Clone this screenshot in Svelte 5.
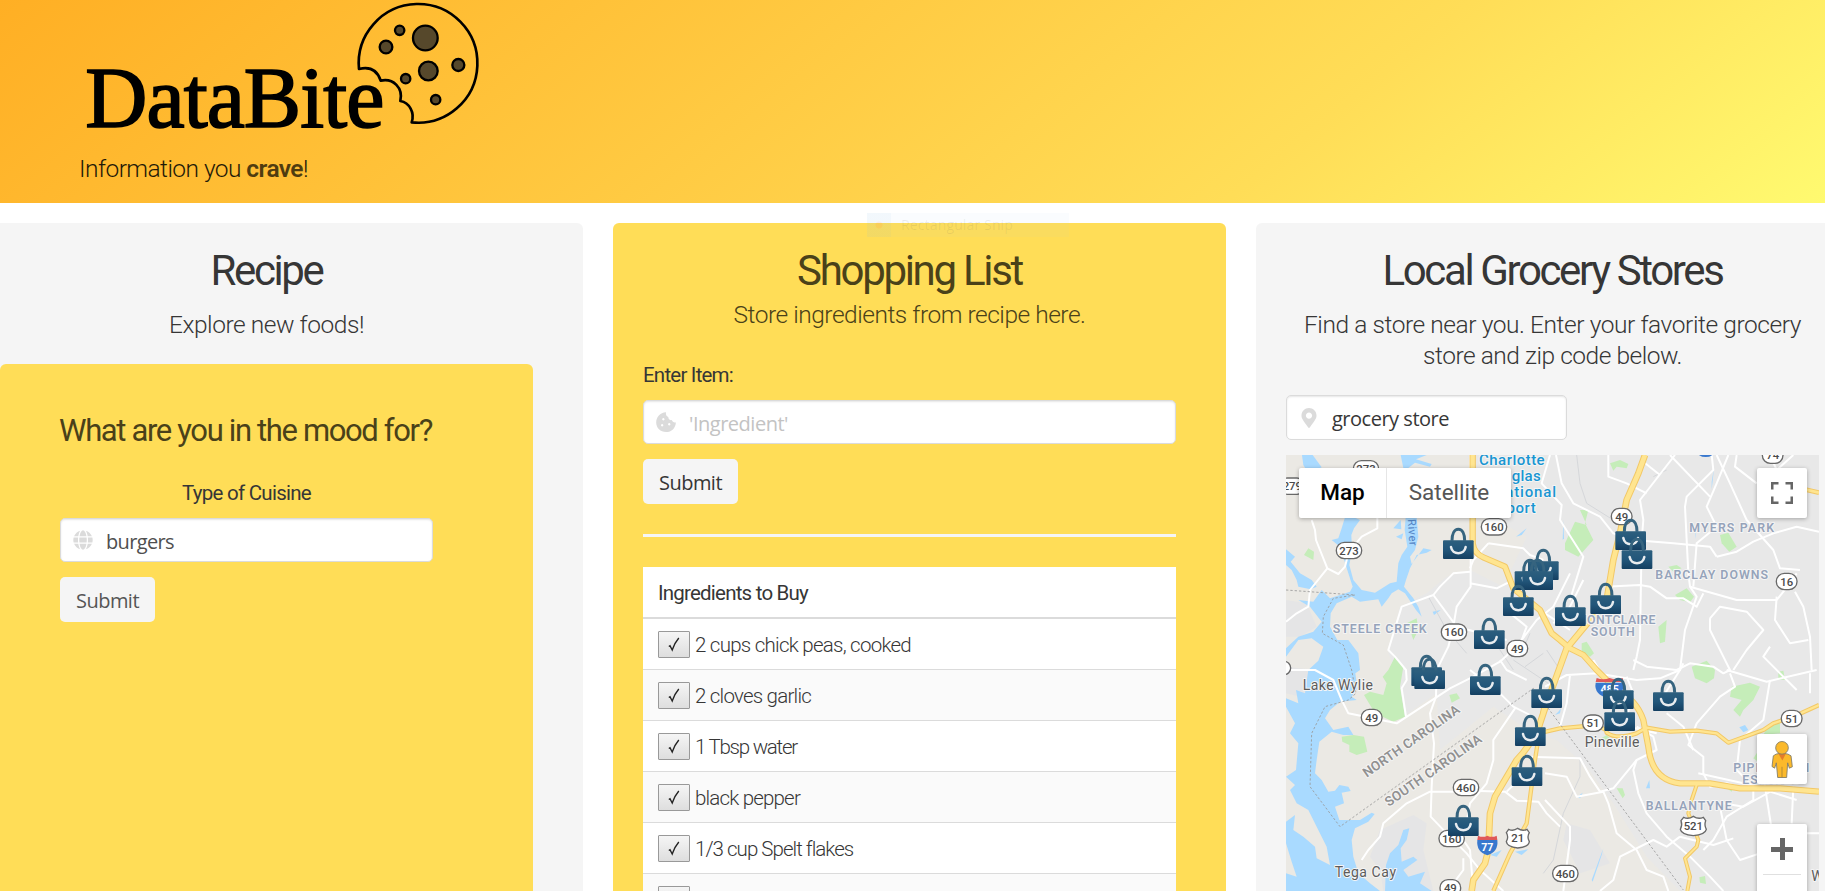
<script>
  const ingredients = [
    { text: '2 cups chick peas, cooked', width: 216 },
    { text: '2 cloves garlic', width: 116 },
    { text: '1 Tbsp water', width: 102 },
    { text: 'black pepper', width: 105 },
    { text: '1/3 cup Spelt flakes', width: 158 },
    { text: '', width: 0 }
  ];

  // Adjusts tracking so that a heading occupies its design width.
  function fit(node, width) {
    if (!width) return;
    const natural = node.getBoundingClientRect().width;
    const gap = (width - natural) / node.textContent.length;
    node.style.letterSpacing = `${gap.toFixed(3)}px`;
  }

  // Map geometry: three units per CSS pixel.
  const water = [
    'M66 45H98L125 82 85 100 70 75Z',
    'M362 45H440L408 58 455 72 450 80 405 68 385 84H370Z',
    'M195 232H222L240 240 222 265 214 285 216 330 208 375 220 420 245 450 285 458 330 430 350 425 355 370 365 345 382 320 374 270 377 232H410L415 290 405 330 390 350 395 372 430 325 455 330 440 338 410 345 390 385 378 420 372 440 400 475 415 500 425 530 408 510 375 460 355 448 335 460 325 475 305 500 295 478 240 485 215 470 170 490 152 520 150 560 172 600 205 600 235 640 240 690 226 700 232 745 215 770 230 780 180 785 150 810 135 835 160 870 205 860 220 885 190 885 155 875 118 905 110 960 105 1000 125 1020 145 1055 165 1052 178 1035 205 1040 212 1053 185 1058 192 1090 165 1100 178 1140 240 1140 275 1118 284 1122 265 1145 225 1165 215 1200 220 1250 235 1300 270 1330 300 1353H18V1300L50 1310 35 1265 18 1210 18 1145 45 1125 40 1170 70 1190 105 1220 110 1255 150 1275 140 1220 110 1160 85 1110 50 1090 30 1050 45 1035 18 1010 48 990 55 910 30 880 45 850 18 800 18 775 55 790 48 750 75 760 85 690 115 662 130 620 95 595 55 600 18 650V625L55 590 100 575 125 545 90 500 55 480 100 485 125 450 150 475 210 455 218 440 205 400 180 320 155 300 175 295 185 265Z',
    'M18 328L45 350 32 365 60 400 95 420 110 440 92 448 55 440 50 420 35 390 18 375Z',
    'M340 265L362 240 364 268Z', 'M348 290L370 280 365 298Z',
    'M315 1353L318 1275 330 1240 355 1215 370 1170 388 1165 380 1200 362 1225 365 1265 400 1250 412 1260 370 1290 385 1310 435 1295 420 1330 455 1353Z',
    'M1295 125L1302 85 1295 150Z', 'M708 290L740 265 725 285Z', 'M458 515L482 510 462 525Z',
    'M835 815L843 805 840 820 825 825Z', 'M1378 862L1395 855 1405 870 1390 877Z', 'M630 1245L665 1230 650 1250Z',
    'M705 1235L745 1228 725 1245Z', 'M892 1070L908 1058 900 1075Z', 'M935 1320L970 1225 965 1245 938 1325Z',
    'M1098 1045L1108 1020 1110 1045Z', 'M850 240L852 295 848 300Z', 'M1245 280V298L1247 280Z'
  ];
  const parks = [
    'M855 310L885 245 920 255 900 210 925 210 915 250 940 300 895 350 855 330Z',
    'M990 70L1020 60 1045 72 1040 85 1010 80 1000 92Z',
    'M1320 285L1345 278 1370 320 1348 335 1325 310Z',
    'M1185 465L1220 445 1242 470 1230 487 1200 480Z',
    'M1165 380L1190 375 1205 385 1180 395Z', 'M1135 560L1160 540 1155 605 1140 610Z',
    'M905 610L920 605 942 640 930 650 905 635Z', 'M1235 680L1280 662 1305 690 1302 715 1280 730 1245 715Z',
    'M325 690L345 650 370 680 360 740 375 830 340 845 285 820 252 765 270 755 310 765 320 730 308 710Z',
    'M185 890L220 885 252 890 262 935 230 945 208 935 208 915 187 905Z',
    'M508 765L530 760 540 775 515 788Z', 'M72 345L85 325 102 335 100 360Z',
    'M380 550L410 535 415 570 400 600 390 570Z',
    'M1355 740L1410 728 1440 740 1420 780 1390 810 1380 830 1360 810 1385 780 1350 770Z',
    'M1495 695L1510 692 1515 720 1495 718Z', 'M1465 855L1500 840 1500 880 1450 885Z',
    'M1010 1045L1028 1045 1035 1065 1028 1075Z', 'M1258 1312L1275 1308 1278 1332 1260 1328Z',
    'M1440 925L1440 970 1420 955Z', 'M955 900L980 885 990 895 970 905Z', 'M1340 1045L1360 1040 1355 1055Z'
  ];
  const roads = [
    'M95 240L105 270 108 300 142 385 175 402 195 380 210 320M142 385L90 450 85 500 50 520 18 545M292 232V265L245 290 220 320',
    'M570 45V90M572 355V440L530 500 520 560 505 620 470 690 468 770 450 820 462 910 455 1040 452 1130 500 1180 560 1240 600 1290 670 1353',
    'M460 465L480 440 520 400 570 395M460 465L365 500 325 630 345 650 378 690 380 720 365 745 378 830M460 465L530 560 680 600',
    'M625 310L730 325 750 345 790 360M625 310L580 360 570 385M570 430L650 445 700 420M690 520L740 560 725 600 770 540 820 500 870 400',
    'M18 690L105 690 160 720 185 780 205 820 350 850 510 745 580 710 660 665 720 610',
    'M660 660L680 690 740 720M570 690L660 760 700 800 760 830M705 805L640 900V960L620 1030 570 1090 550 1200 570 1230 580 1353',
    'M245 1260L265 1230 300 1190 310 1150 380 1090 450 1055 520 1055M600 1053L675 1055 710 1082 775 1085 800 1120 840 1160',
    'M680 1055L700 1035 740 1025M740 950L900 955 930 1010 960 1055 1000 1045 1070 960M550 1255L550 1290 520 1330',
    'M810 45L785 130 845 195 840 240 910 350 870 480M828 45L845 130 880 190 960 230 1000 280 1060 300 1180 310 1290 320 1310 350',
    'M985 45V110L1040 130 1100 160M1090 65L1140 105M1185 45L1080 180 1090 240 1085 300 1080 600 1070 650 1060 690',
    'M1295 45L1300 90 1220 170 1215 200 1225 400 1230 440 1250 470 1215 570 1200 690 1130 800M1345 45L1310 130 1280 200 1310 260 1250 310 1240 440',
    'M1310 45L1350 130 1400 240 1480 330 1500 385 1560 390M1370 45L1365 80 1430 130M1170 45L1290 170',
    'M910 420L870 500 820 550M975 440L1080 435 1110 440 1160 475 1210 475 1250 500 1270 460M1230 440L1370 480 1490 480 1530 430 1550 400',
    'M1310 350L1370 335 1420 305 1480 280 1550 260 1617 275M1545 455L1570 500 1590 590 1595 690M1490 470L1485 540 1530 610 1585 600',
    'M1290 535L1320 500 1400 515 1450 570 1400 630 1360 690M1290 535V570L1330 650 1350 690 1330 700 1300 680 1230 670 1190 690 1100 680 1060 660',
    'M1350 700L1365 740 1320 770 1250 850 1225 915 1270 950 1270 1000 1290 1040 1340 1030 1410 1050M1340 690L1460 725 1610 690',
    'M795 740L860 705 950 700 1070 720 1140 715 1200 690 1210 670M870 705L860 790 840 860M1040 710L1060 760 1040 830 1045 860 1130 880',
    'M940 660L970 710M1160 820L1210 860 1240 930M1070 860L1120 890 1130 930 1070 960 1060 990 1075 1060 1100 1120 1160 1190 1230 1250 1290 1310 1330 1353',
    'M1590 700L1590 760M1470 720L1450 840 1380 900 1370 990 1420 1040 1420 1080 1340 1130 1300 1200 1270 1230',
    'M1450 1010L1455 1040 1480 1200M1540 1040L1535 1150M1200 1190L1160 1220 1120 1200 1020 1250 1000 1320 960 1353',
    'M795 1000L860 1010 890 1070 970 1055 985 1090 1010 1180 1070 1230 1100 1290 1150 1310 1165 1353M795 1080L870 1160 870 1200 850 1353',
    'M1320 1100L1340 1200 1380 1260 1440 1240M1200 1190L1300 1215 1360 1195M1255 1000L1390 1030 1550 1080M1480 1050L1390 1100 1330 1090',
    'M1550 750L1450 650 1470 620M1550 1180L1617 1180M795 520L870 570M1540 45L1490 90 1470 45'
  ];
  const highways = [
    { d: 'M578 45V310Q582 340 610 352L675 380 700 445 780 510 815 580 840 600 868 624 910 645 950 690 1010 750Q1070 780 1090 840L1105 920Q1115 1020 1200 1030L1290 1030 1380 1045 1500 1045 1617 1055', w: 16 },
    { d: 'M1095 45L1075 100 1040 180 1020 280 1000 360 980 480 860 625 800 790 780 850Q750 920 710 960L645 1070 630 1120 625 1230 615 1270 580 1320 575 1353', w: 17 },
    { d: 'M790 800L765 960 740 1150 690 1240 640 1353', w: 10 },
    { d: 'M775 880L840 865 920 858Q980 860 980 878Q1010 900 1070 880L1100 863 1170 875 1250 872 1310 880 1345 908 1450 870 1480 850 1540 830 1617 795', w: 10 },
    { d: 'M1250 1035L1235 1080 1225 1120 1255 1200 1250 1220 1215 1255 1230 1310 1222 1353', w: 9 },
    { d: 'M1495 105L1540 140 1617 158', w: 11 }
  ];
  const shields = [
    ['273', 258, 87], ['279', 37, 139], ['273', 207, 332], ['160', 642, 261], ['160', 522, 577],
    ['49', 712, 626], ['49', 1025, 230], ['16', 1520, 425], ['74', 1478, 46], ['49', 275, 833],
    ['460', 558, 1043], ['160', 515, 1196], ['49', 511, 1344], ['51', 939, 850], ['51', 1535, 836],
    ['460', 856, 1301]
  ];
  const bags = [
    [535, 357], [790, 420], [750, 450], [773, 450], [715, 528], [628, 627], [1052, 330], [1071, 387],
    [977, 522], [871, 558], [440, 738], [449, 747], [616, 765], [800, 804], [751, 918],
    [741, 1038], [550, 1188], [1015, 807], [1019, 873], [1165, 813]
  ];
</script>

<div class="page">
  <header>
    <svg class="logo" viewBox="60 0 1200 456">
      <text x="76" y="382" textLength="897">DataBite</text>
      <path d="M897 207A178 178 0 1 1 1055 367C1065 337 1048 308 1021 303C1030 263 1000 234 962 242C952 211 930 199 897 207Z" />
      <g class="chips">
        <circle cx="1096" cy="114" r="37" /><circle cx="1019" cy="91" r="14" />
        <circle cx="978" cy="141" r="19" /><circle cx="1105" cy="213" r="28" />
        <circle cx="1037" cy="236" r="14" /><circle cx="1195" cy="195" r="18" />
        <circle cx="1127" cy="299" r="14" />
      </g>
    </svg>
    <p class="lead"><span use:fit={229}>Information you <b>crave</b>!</span></p>
  </header>

  <main>
    <section class="panel recipe">
      <h1><span use:fit={112}>Recipe</span></h1>
      <p class="lead sub"><span use:fit={195}>Explore new foods!</span></p>
      <div class="mood">
        <div class="form">
          <h2><span use:fit={373}>What are you in the mood for?</span></h2>
          <div class="label center"><span use:fit={129}>Type of Cuisine</span></div>
          <div class="input">
            <svg class="icon" viewBox="0 0 496 512"><path d="M336.5 160C322 70.7 287.8 8 248 8s-74 62.7-88.5 152h177zM152 256c0 22.2 1.2 43.5 3.3 64h185.3c2.1-20.5 3.3-41.8 3.3-64s-1.2-43.5-3.3-64H155.3c-2.1 20.5-3.3 41.8-3.3 64zm324.7-96c-28.6-67.9-86.5-120.4-158-141.6 24.4 33.8 41.2 84.7 50 141.6h108zM177.2 18.4C105.8 39.6 47.8 92.1 19.3 160h108c8.7-56.9 25.5-107.8 49.9-141.6zM487.4 192H372.7c2.1 21 3.3 42.5 3.3 64s-1.2 43-3.3 64h114.6c5.5-20.5 8.6-41.8 8.6-64s-3.1-43.5-8.5-64zM120 256c0-21.5 1.2-43 3.3-64H8.6C3.2 212.5 0 233.8 0 256s3.2 43.5 8.6 64h114.6c-2-21-3.2-42.5-3.2-64zm39.5 96c14.5 89.3 48.7 152 88.5 152s74-62.7 88.5-152h-177zm159.3 141.6c71.4-21.2 129.4-73.7 158-141.6h-108c-8.8 56.9-25.6 107.8-50 141.6zM19.3 352c28.6 67.9 86.5 120.4 158 141.6-24.4-33.8-41.2-84.7-50-141.6h-108z" /></svg>
            <span class="muted" use:fit={68}>burgers</span>
          </div>
          <button class="submit muted"><span use:fit={63}>Submit</span></button>
        </div>
      </div>
    </section>

    <section class="panel shopping">
      <div class="snip"><i></i><span use:fit={112}>Rectangular Snip</span></div>
      <h1><span use:fit={225}>Shopping List</span></h1>
      <p class="lead sub"><span use:fit={352}>Store ingredients from recipe here.</span></p>
      <div class="label"><span use:fit={90}>Enter Item:</span></div>
      <div class="input">
        <svg class="icon" viewBox="0 0 20 20"><path fill-rule="evenodd" d="M10 .2C4 .7.2 5 .2 10.5.2 16 4.5 20 10 20c5.600 0 9.600-4 9.900-9.600-1.800.6-3.600-.3-4-2.300-2.100.3-3.700-1.200-3.600-3.200C10.300 4.400 9.600 2.200 10 .2zM7.300 6a1.200 1.200 0 1 0 .1 0zM6.100 12a1.200 1.200 0 1 0 .1 0zM13.200 11a1.200 1.200 0 1 0 .1 0z" /></svg>
        <span class="placeholder" use:fit={99}>'Ingredient'</span>
      </div>
      <button class="submit"><span use:fit={63}>Submit</span></button>
      <div class="rule"></div>
      <div class="table">
        <div class="head"><span use:fit={150}>Ingredients to Buy</span></div>
        {#each ingredients as item}
          <div class="row">
            <button class="check" aria-label="Done">
              <svg viewBox="0 0 12 16"><path d="M.8 9.500L2 8.800 4.200 13Q6.500 6 10.800 1" /></svg>
            </button>
            <span use:fit={item.width}>{item.text}</span>
          </div>
        {/each}
      </div>
    </section>

    <section class="panel stores">
      <h1><span use:fit={340}>Local Grocery Stores</span></h1>
      <p class="lead sub">
        <span use:fit={497}>Find a store near you. Enter your favorite grocery</span>
        <span use:fit={259}>store and zip code below.</span>
      </p>
      <div class="input short">
        <svg class="icon" viewBox="0 0 384 512"><path d="M172.268 501.67C26.97 291.031 0 269.413 0 192 0 85.961 85.961 0 192 0s192 85.961 192 192c0 77.413-26.97 99.031-172.268 309.67-9.535 13.774-29.93 13.773-39.464 0zM192 272c44.183 0 80-35.817 80-80s-35.817-80-80-80-80 35.817-80 80 35.817 80 80 80z" /></svg>
        <span use:fit={117}>grocery store</span>
      </div>

      <div class="map">
        <svg class="canvas" viewBox="18 45 1599 1308">
          <defs>
            <linearGradient id="bag" x1="0" y1="0" x2="0" y2="1">
              <stop offset="0" stop-color="#2d5f7e" /><stop offset=".5" stop-color="#22567a" /><stop offset="1" stop-color="#143f61" />
            </linearGradient>
            <g id="pin">
              <path d="M-19-55C-19-75-12-89 0-89S19-75 19-55" fill="none" stroke="#36647f" stroke-width="9" />
              <rect x="-46" y="-56" width="92" height="56" rx="3" fill="url(#bag)" />
              <path d="M-22-36C-18-11 18-11 22-36" fill="none" stroke="#e8ecef" stroke-width="7.500" stroke-linecap="round" />
            </g>
          </defs>
          <rect x="18" y="45" width="1599" height="1308" fill="#e8e8e8" />
          <path fill="#ebe9e4" d="M18 45H560L610 220 740 290 670 440 570 390 500 410 440 460 360 500 325 640 350 700 370 830 470 760 480 930 640 800 760 880 830 900 920 980 1000 1090 1100 1250 1200 1353H18Z" />
          <path fill="#e5e5e6" d="M18 480L80 490 110 560 60 590 18 590ZM400 1125L440 1150 430 1230 460 1353H310L300 1290 270 1250 300 1170ZM18 680L110 690 150 740 60 770 18 760ZM860 1150L930 1170 990 1270 900 1300 850 1200Z" />
          {#each parks as d}<path {d} fill="#c5edb9" />{/each}
          {#each water as d}<path {d} fill="#a9daff" />{/each}
          <g class="minor">
            <path d="M890 45L900 130 920 190 1000 240M445 470L500 570 560 640M700 660L820 740M735 680L790 640M800 630L840 690M900 960L900 1010 850 1120 820 1260 790 1300M640 600L700 690M750 580L720 650M1120 110L1160 90" />
          </g>
          <g class="roads">{#each roads as d}<path {d} />{/each}</g>
          <g class="highways">
            {#each highways as h}<path d={h.d} stroke="#f2c867" stroke-width={h.w + 3} />{/each}
            {#each highways as h}<path d={h.d} stroke="#ffe590" stroke-width={h.w - 3} />{/each}
          </g>
          <path class="border" d="M18 450L225 465 160 475 130 530 127 580 190 615 215 690 228 760 205 780 135 800 95 880 90 1040 180 1160 760 745 1210 1350" />

          <g class="place area">
            <text x="158" y="579" textLength="282">STEELE CREEK</text>
            <text x="1228" y="276" textLength="254">MYERS PARK</text>
            <text x="1126" y="417" textLength="338">BARCLAY DOWNS</text>
            <text x="888" y="551" textLength="238">MONTCLAIRE</text>
            <text x="932" y="587" textLength="132">SOUTH</text>
            <text x="1097" y="1109" textLength="258">BALLANTYNE</text>
            <text x="1360" y="996" textLength="228">PIPER GLEN</text>
            <text x="1387" y="1033" textLength="172">ESTATES</text>
          </g>
          <g class="place state">
            <text transform="translate(260 1013) rotate(-35)" textLength="345">NORTH CAROLINA</text>
            <text transform="translate(326 1101) rotate(-35)" textLength="345">SOUTH CAROLINA</text>
          </g>
          <g class="place town">
            <text x="68" y="750" textLength="211">Lake Wylie</text>
            <text x="164" y="1311" textLength="184">Tega Cay</text>
            <text x="914" y="922" textLength="164">Pineville</text>
            <text x="1594" y="1324">W</text>
          </g>
          <g class="place airport">
            <text x="597" y="75" textLength="197">Charlotte</text>
            <text x="643" y="123" textLength="139">ouglas</text>
            <text x="630" y="171" textLength="198">rnational</text>
            <text x="662" y="220" textLength="105">rport</text>
          </g>
          <text class="river" transform="translate(383 238) rotate(86)" textLength="80">River</text>

          {#each shields as [label, x, y]}
            <g class="shield" transform="translate({x} {y})">
              <rect x={label.length > 2 ? -38 : -31} y="-25" width={label.length > 2 ? 76 : 62} height="49" rx="24" />
              <text y="12">{label}</text>
            </g>
          {/each}
          <g class="shield us">
            <path d="M686 1168Q700 1175 713 1165Q727 1175 741 1168L748 1178Q740 1190 748 1205Q746 1221 713 1224Q681 1221 679 1205Q687 1190 679 1178Z" />
            <text x="713" y="1206">21</text>
            <path d="M1211 1132Q1225 1139 1240 1129Q1255 1139 1270 1132L1277 1142Q1272 1155 1279 1168Q1276 1183 1240 1187Q1204 1183 1201 1168Q1208 1155 1203 1142Z" />
            <text x="1240" y="1170">521</text>
          </g>
          <g class="interstate">
            <path fill="#3878ce" d="M592 1200H652Q656 1235 622 1246Q588 1235 592 1200Z" />
            <path fill="#df5858" d="M594 1187Q609 1194 622 1187Q636 1194 650 1187L652 1200H592Z" />
            <text x="622" y="1233">77</text>
            <path fill="#3878ce" d="M947 728H1030Q1036 765 989 775Q940 765 947 728Z" />
            <path fill="#df5858" d="M950 714Q970 722 989 714Q1009 722 1028 714L1030 726H947Z" />
            <text x="989" y="760">485</text>
            <ellipse cx="1277" cy="32" rx="27" ry="19" fill="#3878ce" />
          </g>
          <circle cx="12" cy="684" r="20" fill="#fff" stroke="#666" stroke-width="4" />
          {#each bags as [x, y]}<use href="#pin" {x} {y} />{/each}
        </svg>

        <div class="types"><b>Map</b><span>Satellite</span></div>
        <div class="control full">
          <svg viewBox="0 0 22 22"><path d="M1.250 7.500V1.250H7.500M14.500 1.250H20.750V7.500M20.750 14.500V20.750H14.500M7.500 20.750H1.250V14.500" /></svg>
        </div>
        <div class="control person">
          <svg viewBox="675 238 66 116">
            <path fill="#fbb92b" stroke="#7c7867" stroke-width="2.500" d="M690 280L708 276 726 280 735 285 739 318 730 322 725 306 722 350H695L691 306 686 322 678 317 682 285Z" />
            <path fill="#e57c2a" d="M697 278L720 278 709 299Z" />
            <path stroke="#a58236" stroke-width="2.500" d="M708 318V350" />
            <circle cx="708" cy="261" r="19" fill="#fbb92b" stroke="#7c7867" stroke-width="2.500" />
          </svg>
        </div>
        <div class="control zoom"><i></i></div>
      </div>
    </section>
  </main>
</div>

<style>
  :global(body) { margin: 0; overflow: hidden; background: #fff; }
  .page {
    width: 1825px; height: 891px; overflow: hidden;
    font-family: Roboto, "Liberation Sans", sans-serif; font-weight: 300; color: #363636;
  }
  h1, h2, p { margin: 0; }
  span { white-space: nowrap; }
  h1 span, h2 span, p span, .label span, .head span, .input span, .row span, .submit span, .snip span { display: inline-block; }

  header {
    height: 203px; box-sizing: border-box; padding-left: 80px;
    background: linear-gradient(141deg, #ffaf24 0%, #ffdd57 71%, #fffa70 100%);
  }
  .logo { display: block; width: 400px; height: 152px; }
  .logo text { font: 258px "Liberation Serif", serif; stroke: #000; stroke-width: 5; }
  .logo path { fill: none; stroke: #000; stroke-width: 8; stroke-linejoin: round; }
  .chips { fill: #56482b; stroke: #000; stroke-width: 7; }
  .lead { font-size: 24.500px; line-height: 31px; }
  header .lead { padding-top: 1px; color: #1f1a08; }
  header .lead span { margin-left: -1px; }
  header b { font-weight: 600; color: #4f3c10; }

  main { display: flex; gap: 30px; padding-top: 20px; }
  .panel {
    flex: none; box-sizing: border-box; width: 613px; height: 700px;
    padding: 25px 50px 0 30px; background: #f5f5f5; border-radius: 6px 6px 0 0;
  }
  .recipe { width: 583px; padding-left: 0; border-top-left-radius: 0; }
  h1 { font-size: 42px; line-height: 46px; font-weight: 400; text-align: center; }
  .sub { margin-top: 15px; margin-bottom: 24px; text-align: center; }
  .stores { padding-right: 30px; width: 593px; }

  .mood { height: 600px; padding: 49px 0 0 60px; background: #ffdd57; border-radius: 6px 6px 0 0; }
  .form { width: 373px; }
  h2 { font-size: 31px; line-height: 36px; font-weight: 400; color: #4a4119; }
  h2 span { margin-left: -1px; }
  .label { margin-bottom: 10px; padding-top: 1px; font-size: 20.500px; line-height: 30px; font-weight: 400; }
  .center { margin-top: 28px; text-align: center; }

  .input {
    display: flex; align-items: center; height: 44px; box-sizing: border-box;
    border: 1px solid #dbdbdb; border-radius: 5px; background: #fff;
    box-shadow: inset 0 1px 2px rgba(10, 10, 10, .1);
    font: 20px/30px "Open Sans", "Noto Sans", sans-serif;
  }
  .input span { padding-top: 3px; }
  .input .icon { width: 20px; height: 20px; margin: 0 13px 0 12px; fill: #dbdbdb; }
  .muted { color: #4f4f4f; }
  .placeholder { color: #c3c3c3; }
  .short { width: 281px; height: 45px; }
  .submit {
    display: flex; align-items: center; justify-content: center; width: 95px; height: 45px;
    margin: 15px 0 0; padding: 3px 0 0; border: 0; border-radius: 5px; background: #f5f5f5;
    font: 20px/30px "Open Sans", "Noto Sans", sans-serif; color: #363636;
  }
  .submit.muted { color: #555; }

  .shopping { position: relative; background: #ffdd57; }
  .shopping h1, .shopping .sub { color: #4a4119; }
  .shopping .sub { margin: 5px 0 29px; }
  .snip {
    position: absolute; left: 254px; top: -10px; width: 202px; height: 24px;
    display: flex; align-items: center; gap: 10px; background: rgba(170, 205, 240, .06);
    font: 14px/24px "Open Sans", sans-serif; color: rgba(60, 70, 80, .09);
  }
  .snip i { width: 24px; height: 24px; background: radial-gradient(circle, rgba(230, 90, 50, .1) 3px, rgba(100, 170, 220, .05) 4px); }
  .rule { height: 3px; margin: 30px 0; background: #f5f5f5; }
  .table { background: #fff; font-size: 20.500px; }
  .head { height: 50px; padding-left: 15px; border-bottom: 2px solid #dbdbdb; line-height: 52px; font-weight: 400; }
  .row { display: flex; align-items: center; gap: 5px; height: 50px; padding-left: 15px; border-bottom: 1px solid #dbdbdb; }
  .row:nth-child(odd) { background: #fafafa; }
  .row span { padding-top: 1px; }
  .check {
    display: flex; align-items: center; justify-content: center;
    width: 32px; height: 27px; padding: 2px 0 0; border: 1px solid #999; border-radius: 1px;
    background: linear-gradient(#f5f5f5, #dedede);
  }
  .check svg { width: 12px; height: 16px; fill: none; stroke: #222; stroke-width: 1.400; }

  .map { position: relative; width: 533px; height: 436px; margin-top: 15px; overflow: hidden; }
  .canvas { display: block; width: 533px; height: 436px; }
  .roads { fill: none; stroke: #fff; stroke-width: 6; stroke-linejoin: round; }
  .minor { fill: none; stroke: #d5d7da; stroke-width: 3; }
  .highways { fill: none; stroke-linejoin: round; }
  .border { fill: none; stroke: #999; stroke-width: 2.500; stroke-dasharray: 7 6; }
  .place { paint-order: stroke; stroke: #f5f5f5; stroke-width: 6; stroke-linejoin: round; }
  .area { font-size: 37px; font-weight: 600; fill: #95a3ba; }
  .state { font-size: 40px; font-weight: 600; fill: #919191; }
  .town { font-size: 42px; font-weight: 400; fill: #5c5c5c; }
  .airport { font-size: 45px; font-weight: 500; fill: #1a96d2; }
  .river { font-size: 34px; font-weight: 400; fill: #5484c5; }
  .shield rect, .us path { fill: #fff; stroke: #696969; stroke-width: 4; }
  .shield text { font-size: 34px; font-weight: 500; fill: #4a4a4a; text-anchor: middle; }
  .interstate text { font-size: 32px; font-weight: 700; fill: #fff; text-anchor: middle; }

  .types {
    position: absolute; left: 13px; top: 13px; display: flex; width: 212px; height: 50px;
    background: #fff; border-radius: 2px; box-shadow: 0 1px 4px rgba(0, 0, 0, .3);
    font-size: 22.500px; line-height: 49px; text-align: center; color: #565656;
  }
  .types b { width: 87px; font-weight: 500; color: #000; border-right: 1px solid #e6e6e6; }
  .types span { flex: 1; font-weight: 400; }
  .control {
    position: absolute; left: 471px; width: 50px; height: 50px; display: flex;
    align-items: center; justify-content: center; background: #fff; border-radius: 2px;
    box-shadow: 0 1px 4px rgba(0, 0, 0, .3);
  }
  .full { top: 13px; }
  .full svg { width: 22px; height: 22px; fill: none; stroke: #666; stroke-width: 2.500; }
  .person { top: 279px; }
  .person svg { width: 22px; height: 39px; }
  .zoom { top: 369px; height: 101px; align-items: flex-start; }
  .zoom::after { content: ""; position: absolute; left: 6px; top: 50px; width: 38px; height: 1px; background: #e0e0e0; }
  .zoom i {
    width: 22px; height: 22px; margin-top: 14px;
    background: linear-gradient(#666, #666) center / 22px 5px no-repeat, linear-gradient(#666, #666) center / 5px 22px no-repeat;
  }
</style>
